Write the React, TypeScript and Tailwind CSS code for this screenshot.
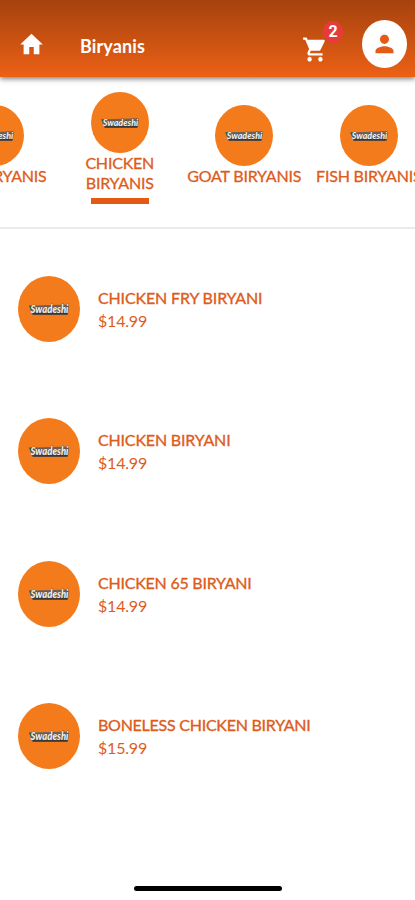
const categories = [
  { lines: ['VEG BIRYANIS'], active: false },
  { lines: ['CHICKEN', 'BIRYANIS'], active: true },
  { lines: ['GOAT BIRYANIS'], active: false },
  { lines: ['FISH BIRYANIS'], active: false },
];

const dishes = [
  { name: 'CHICKEN FRY BIRYANI', price: '$14.99', tracking: 'tracking-[-0.14px]' },
  { name: 'CHICKEN BIRYANI', price: '$14.99', tracking: 'tracking-[-0.17px]' },
  { name: 'CHICKEN 65 BIRYANI', price: '$14.99', tracking: 'tracking-[-0.23px]' },
  { name: 'BONELESS CHICKEN BIRYANI', price: '$15.99', tracking: 'tracking-[-0.25px]' },
];

function Brand({ className }: { className: string }) {
  return (
    <svg viewBox="0 0 62 66" preserveAspectRatio="none" className={className} aria-label="Swadeshi">
      <ellipse cx="31" cy="33" rx="31" ry="33" fill="#f47b1b" />
      <path d="M11 29.5 L16 29.5 L50.5 28.5 L51 31 L49.5 38.5 L14.5 38.5 L13 35.5 Z" fill="#6e6259" />
      <path d="M15 36.5 H50 L49.5 38.7 H14.5 Z" fill="#37393b" />
      <path d="M11 29.8 h4.5 l1.5 4 h-4z" fill="#20614b" />
      <text
        x="12.5"
        y="36.6"
        textLength="38"
        lengthAdjust="spacingAndGlyphs"
        fill="#f1efec"
        stroke="#383533"
        strokeWidth="0.6"
        paintOrder="stroke"
        className="font-['Lato',sans-serif] text-[10.5px] font-black italic"
      >
        Swadeshi
      </text>
    </svg>
  );
}

function Icon({ d, className }: { d: string; className: string }) {
  return (
    <svg viewBox="0 0 24 24" preserveAspectRatio="none" fill="currentColor" className={className}>
      <path d={d} />
    </svg>
  );
}

const homePath = 'M10 20v-6h4v6h5v-8h3L12 3 2 12h3v8z';
const cartPath =
  'M7 18c-1.1 0-1.99.9-1.99 2S5.9 22 7 22s2-.9 2-2-.9-2-2-2zM1 2v2h2l3.6 7.59-1.35 2.45c-.16.28-.25.61-.25.96 0 1.1.9 2 2 2h12v-2H7.42c-.14 0-.25-.11-.25-.25l.03-.12.9-1.63h7.45c.75 0 1.41-.41 1.75-1.03l3.58-6.49c.08-.14.12-.31.12-.48 0-.55-.45-1-1-1H5.21l-.94-2H1zm16 16c-1.1 0-1.99.9-1.99 2s.89 2 1.99 2 2-.9 2-2-.9-2-2-2z';
const personPath =
  'M12 12c2.21 0 4-1.79 4-4s-1.79-4-4-4-4 1.79-4 4 1.79 4 4 4zm0 2c-2.67 0-8 1.34-8 4v2h16v-2c0-2.66-5.33-4-8-4z';

export default function App() {
  return (
    <div className="flex h-[900px] w-[415px] flex-col overflow-hidden bg-white font-['Lato',sans-serif] text-[#dd5c1c]">
      <header className="z-10 flex h-[77px] shrink-0 items-start bg-linear-to-b from-[#a6420e] to-[#ec6115] text-white shadow-[0_2px_5px_rgba(0,0,0,0.5)]">
        <Icon d={homePath} className="mt-[30px] ml-[18px] h-[29px] w-[27px]" />
        <h1 className="mt-[34px] ml-[35px] text-[18px] leading-6 font-bold tracking-[0.12px]">Biryanis</h1>
        <div className="relative mt-[35px] mr-[34px] ml-auto">
          <Icon d={cartPath} className="h-[29px] w-[26px]" />
          <span className="absolute -top-[14px] left-[21px] flex h-[22px] w-5 items-center justify-center rounded-[50%] bg-[#e73b3b] font-['Roboto',sans-serif] text-[16px] font-bold">
            2
          </span>
        </div>
        <div className="mt-5 mr-[8px] flex h-12 w-[45px] items-center justify-center rounded-[50%] bg-white text-[#e35b14]">
          <Icon d={personPath} className="h-7 w-[27px]" />
        </div>
      </header>

      <nav className="flex h-[152px] shrink-0 items-start border-b-2 border-[#ebebeb]">
        <div className="-ml-[67px] flex shrink-0">
          {categories.map((c) => (
            <div
              key={c.lines[0]}
              className={`flex w-[124.5px] shrink-0 flex-col items-center ${c.active ? 'pt-[15px]' : 'pt-7'}`}
            >
              <Brand className="h-[61px] w-[58px]" />
              {c.lines.map((line) => (
                <span
                  key={line}
                  className="text-[16px] leading-5 tracking-[-0.2px] whitespace-nowrap [-webkit-text-stroke:0.3px_#dd5c1c]"
                >
                  {line}
                </span>
              ))}
              {c.active && <span className="mt-[5px] h-[6px] w-[58px] bg-[#e55a13]" />}
            </div>
          ))}
        </div>
      </nav>

      <main className="flex flex-col pt-[47px]">
        {dishes.map((dish) => (
          <article key={dish.name} className="flex h-[142.3px] items-start pl-[18px]">
            <Brand className="h-[66px] w-[62px]" />
            <div className="pt-[10px] pl-[18px]">
              <h2
                className={`text-[16px] leading-6 whitespace-nowrap [-webkit-text-stroke:0.35px_#dd5c1c] ${dish.tracking}`}
              >
                {dish.name}
              </h2>
              <p className="text-[16px] leading-[22px] tracking-[-0.2px]">{dish.price}</p>
            </div>
          </article>
        ))}
      </main>

      <div className="mt-auto mb-[9px] ml-[134px] h-[5px] w-[148px] shrink-0 rounded-full bg-black" />
    </div>
  );
}
